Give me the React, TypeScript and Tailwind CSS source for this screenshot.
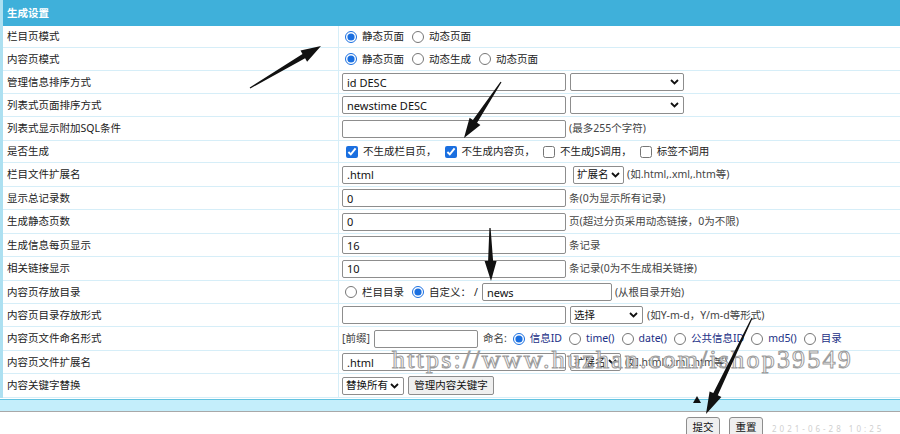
import React from "react";

const FONT = "font-['Noto_Sans','Noto_Sans_CJK_SC',sans-serif]";

function Chevron() {
  return (
    <svg width="9" height="6" viewBox="0 0 9 6" className="shrink-0">
      <path d="M1 1 L4.5 4.5 L8 1" fill="none" stroke="#111" strokeWidth="1.8" />
    </svg>
  );
}

function TextBox({ value = "", w = 224 }: { value?: string; w?: number }) {
  return (
    <div
      className="h-[18px] border border-[#8d8d8d] rounded-[2px] bg-white flex items-center px-[4px] text-[11px] leading-none text-[#111] shrink-0 whitespace-nowrap"
      style={{ width: w }}
    >
      {value}
    </div>
  );
}

function SelectBox({ value = "", w = 114 }: { value?: string; w?: number }) {
  return (
    <div
      className="h-[18px] border border-[#8d8d8d] rounded-[2px] bg-white flex items-center justify-between gap-[2px] pl-[3px] pr-[4px] text-[10.5px] leading-none text-[#111] shrink-0 whitespace-nowrap overflow-hidden"
      style={{ width: w }}
    >
      <span className="whitespace-nowrap">{value}</span>
      <Chevron />
    </div>
  );
}

function Radio({ checked = false }: { checked?: boolean }) {
  return (
    <input
      type="radio"
      readOnly
      checked={checked}
      className="w-[12px] h-[12px] m-0 accent-[#1a6fe0] shrink-0"
    />
  );
}

function Check({ checked = false }: { checked?: boolean }) {
  return (
    <input
      type="checkbox"
      readOnly
      checked={checked}
      className="w-[12px] h-[12px] m-0 accent-[#1a6fe0] shrink-0"
    />
  );
}

function Note({ children }: { children: React.ReactNode }) {
  return <span className="text-[10.5px] leading-none text-[#444] whitespace-nowrap">{children}</span>;
}

function Opt({ checked, label, navy }: { checked?: boolean; label: string; navy?: boolean }) {
  return (
    <span className="flex items-center gap-[5px]">
      <Radio checked={checked} />
      <span className={"text-[10.5px] leading-none whitespace-nowrap " + (navy ? "text-[#1b2f86]" : "text-[#222]")}>
        {label}
      </span>
    </span>
  );
}

function ChkOpt({ checked, label }: { checked?: boolean; label: string }) {
  return (
    <span className="flex items-center gap-[5px]">
      <Check checked={checked} />
      <span className="text-[10.5px] leading-none whitespace-nowrap text-[#222]">{label}</span>
    </span>
  );
}

type Row = { label: string; h: number; content: React.ReactNode };

const rows: Row[] = [
  {
    label: "栏目页模式",
    h: 22,
    content: (
      <div className="flex items-center gap-[8px] pl-[3px]">
        <Opt checked label="静态页面" />
        <Opt label="动态页面" />
      </div>
    ),
  },
  {
    label: "内容页模式",
    h: 23,
    content: (
      <div className="flex items-center gap-[8px] pl-[3px]">
        <Opt checked label="静态页面" />
        <Opt label="动态生成" />
        <Opt label="动态页面" />
      </div>
    ),
  },
  {
    label: "管理信息排序方式",
    h: 23,
    content: (
      <div className="flex items-center gap-[4px]">
        <TextBox value="id DESC" />
        <SelectBox />
      </div>
    ),
  },
  {
    label: "列表式页面排序方式",
    h: 23,
    content: (
      <div className="flex items-center gap-[4px]">
        <TextBox value="newstime DESC" />
        <SelectBox />
      </div>
    ),
  },
  {
    label: "列表式显示附加SQL条件",
    h: 24,
    content: (
      <div className="flex items-center gap-[3px]">
        <TextBox />
        <Note>(最多255个字符)</Note>
      </div>
    ),
  },
  {
    label: "是否生成",
    h: 22,
    content: (
      <div className="flex items-center gap-[8px] pl-[4px]">
        <ChkOpt checked label="不生成栏目页，" />
        <ChkOpt checked label="不生成内容页，" />
        <ChkOpt label="不生成JS调用，" />
        <ChkOpt label="标签不调用" />
      </div>
    ),
  },
  {
    label: "栏目文件扩展名",
    h: 24,
    content: (
      <div className="flex items-center gap-[3px]">
        <TextBox value=".html" />
        <span className="w-[1px]" />
        <SelectBox value="扩展名" w={51} />
        <Note>(如.html,.xml,.htm等)</Note>
      </div>
    ),
  },
  {
    label: "显示总记录数",
    h: 23,
    content: (
      <div className="flex items-center gap-[3px]">
        <TextBox value="0" />
        <Note>条(0为显示所有记录)</Note>
      </div>
    ),
  },
  {
    label: "生成静态页数",
    h: 24,
    content: (
      <div className="flex items-center gap-[3px]">
        <TextBox value="0" />
        <Note>页(超过分页采用动态链接，0为不限)</Note>
      </div>
    ),
  },
  {
    label: "生成信息每页显示",
    h: 23,
    content: (
      <div className="flex items-center gap-[3px]">
        <TextBox value="16" />
        <Note>条记录</Note>
      </div>
    ),
  },
  {
    label: "相关链接显示",
    h: 24,
    content: (
      <div className="flex items-center gap-[3px]">
        <TextBox value="10" />
        <Note>条记录(0为不生成相关链接)</Note>
      </div>
    ),
  },
  {
    label: "内容页存放目录",
    h: 23,
    content: (
      <div className="flex items-center pl-[3px]">
        <Opt label="栏目目录" />
        <span className="w-[8px]" />
        <Opt checked label="自定义：" />
        <span className="text-[10.5px] leading-none text-[#222] ml-[3px] mr-[4px]">/</span>
        <TextBox value="news" w={130} />
        <span className="w-[3px]" />
        <Note>(从根目录开始)</Note>
      </div>
    ),
  },
  {
    label: "内容页目录存放形式",
    h: 23,
    content: (
      <div className="flex items-center gap-[4px]">
        <TextBox />
        <SelectBox value="选择" w={73} />
        <Note>(如Y-m-d，Y/m-d等形式)</Note>
      </div>
    ),
  },
  {
    label: "内容页文件命名形式",
    h: 24,
    content: (
      <div className="flex items-center">
        <Note>[前缀]</Note>
        <span className="w-[4px]" />
        <TextBox w={104} />
        <span className="w-[5px]" />
        <Note>命名:</Note>
        <span className="w-[6px]" />
        <div className="flex items-center gap-[7px]">
          <Opt checked navy label="信息ID" />
          <Opt navy label="time()" />
          <Opt navy label="date()" />
          <Opt navy label="公共信息ID" />
          <Opt navy label="md5()" />
          <Opt navy label="目录" />
        </div>
      </div>
    ),
  },
  {
    label: "内容页文件扩展名",
    h: 23,
    content: (
      <div className="flex items-center gap-[4px]">
        <TextBox value=".html" />
        <SelectBox value="扩展名" w={51} />
        <Note>(如.html,.xml,.htm等)</Note>
      </div>
    ),
  },
  {
    label: "内容关键字替换",
    h: 24,
    content: (
      <div className="flex items-center gap-[4px]">
        <SelectBox value="替换所有" w={62} />
        <div className="h-[19px] w-[86px] border border-[#8d8d8d] rounded-[2px] bg-[#efefef] flex items-center justify-center text-[10.5px] leading-none text-[#111] whitespace-nowrap">
          管理内容关键字
        </div>
      </div>
    ),
  },
];

function arrowPoints(tx: number, ty: number, hx: number, hy: number, hl: number, hw: number, sw: number) {
  const dx = hx - tx;
  const dy = hy - ty;
  const len = Math.sqrt(dx * dx + dy * dy);
  const ux = dx / len;
  const uy = dy / len;
  const nx = -uy;
  const ny = ux;
  const bx = hx - ux * hl;
  const by = hy - uy * hl;
  const pts: [number, number][] = [
    [tx + nx * 0.6, ty + ny * 0.6],
    [bx + (nx * sw) / 2, by + (ny * sw) / 2],
    [bx + (nx * hw) / 2, by + (ny * hw) / 2],
    [hx, hy],
    [bx - (nx * hw) / 2, by - (ny * hw) / 2],
    [bx - (nx * sw) / 2, by - (ny * sw) / 2],
    [tx - nx * 0.6, ty - ny * 0.6],
  ];
  return pts.map((p) => p[0].toFixed(1) + "," + p[1].toFixed(1)).join(" ");
}

export default function App() {
  return (
    <div className={"relative w-[900px] h-[434px] overflow-hidden bg-white " + FONT}>
      <div className="border-l-[3px] border-[#ade0f1]">
        <div className="h-[26px] bg-[#3fb0da] flex items-center pl-[4px] text-white text-[10.5px] font-bold leading-none">
          生成设置
        </div>
        {rows.map((r, i) => (
          <div key={i} className="flex border-b border-[#d6eef8]" style={{ height: r.h }}>
            <div className="w-[336px] shrink-0 border-r border-[#d6eef8] flex items-center pl-[4px] text-[10.5px] leading-none text-[#222] whitespace-nowrap">
              {r.label}
            </div>
            <div className="flex-1 flex items-center pl-[3px]">{r.content}</div>
          </div>
        ))}
      </div>
      <div className="h-[13px] mt-[1px] bg-[#c4eefb] border-t border-[#63c3e0] border-b border-b-[#a8a8a8]" />
      <div className="flex items-start gap-[9px] pl-[686px] pt-[5px]">
        <div className="h-[20px] w-[34px] border border-[#8d8d8d] rounded-[3px] bg-[#efefef] flex items-center justify-center text-[10.5px] leading-none text-[#111]">
          提交
        </div>
        <div className="h-[20px] w-[34px] border border-[#8d8d8d] rounded-[3px] bg-[#efefef] flex items-center justify-center text-[10.5px] leading-none text-[#111]">
          重置
        </div>
        <div className="pt-[8px] text-[8px] leading-none text-[#cfcfcf] tracking-[3px] whitespace-nowrap">
          2021-06-28 10:25
        </div>
      </div>

      {/* watermark */}
      <div className="absolute left-[392px] top-[347px] pointer-events-none font-['Liberation_Serif',serif] text-[26px] leading-none tracking-[2.2px] text-white/70 [-webkit-text-stroke:1px_#9c9c9c] whitespace-nowrap">
        https://www.huzhan.com/ishop39549
      </div>

      {/* annotation arrows */}
      <svg className="absolute inset-0 pointer-events-none" width="900" height="434" viewBox="0 0 900 434">
        <polygon points={arrowPoints(250, 88, 321, 46, 20, 13, 5)} fill="#111" />
        <polygon points={arrowPoints(501, 82, 464, 138, 20, 13, 5)} fill="#111" />
        <polygon points={arrowPoints(490, 228, 491, 281, 20, 12, 5)} fill="#111" />
        <polygon points={arrowPoints(752, 318, 706, 414, 22, 13, 5)} fill="#111" />
        <polygon points="697,396 693,403 701,403" fill="#111" />
      </svg>
    </div>
  );
}
